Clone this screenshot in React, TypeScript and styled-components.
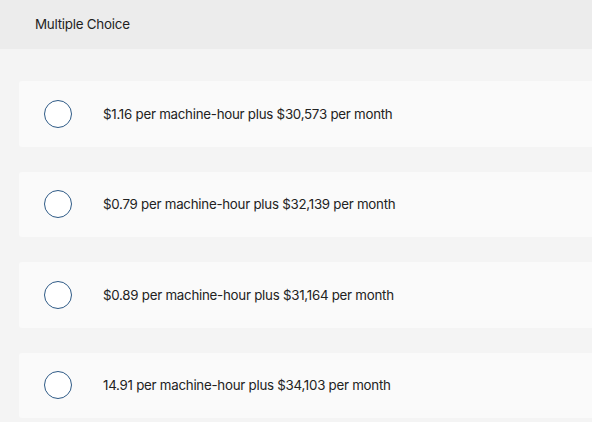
import styled, { createGlobalStyle } from 'styled-components';

const GlobalStyle = createGlobalStyle`
  html, body {
    margin: 0;
    padding: 0;
    background: #f4f4f4;
  }
  * {
    box-sizing: border-box;
  }
`;

const Page = styled.div`
  display: flex;
  flex-direction: column;
  width: 592px;
  height: 422px;
  overflow: hidden;
  background: #f4f4f4;
  font-family: 'Inter', 'Lato', sans-serif;
  color: #222222;
`;

const Header = styled.header`
  display: flex;
  align-items: center;
  height: 49px;
  padding: 0 0 1px 35px;
  background: #ececec;
  font-size: 13.4px;
  letter-spacing: -0.25px;
  color: #1f1f1f;
`;

const Choices = styled.ul`
  display: flex;
  flex-direction: column;
  gap: 25px;
  margin: 0;
  padding: 32px 0 0 19px;
  list-style: none;
`;

const Choice = styled.li`
  display: flex;
  align-items: center;
  gap: 31px;
  height: 65.5px;
  padding-left: 25px;
  background: #fafafa;
  border-radius: 3px 0 0 3px;
  font-size: 13.3px;
  letter-spacing: -0.25px;
  cursor: pointer;
`;

const Radio = styled.span`
  flex: none;
  width: 28px;
  height: 28px;
  border: 1.5px solid #2e5a86;
  border-radius: 50%;
  background: #ffffff;
`;

const options = [
  '$1.16 per machine-hour plus $30,573 per month',
  '$0.79 per machine-hour plus $32,139 per month',
  '$0.89 per machine-hour plus $31,164 per month',
  '14.91 per machine-hour plus $34,103 per month',
];

const App = () => {
  return (
    <Page>
      <GlobalStyle />
      <Header>Multiple Choice</Header>
      <Choices>
        {options.map((text) => (
          <Choice key={text}>
            <Radio />
            <span>{text}</span>
          </Choice>
        ))}
      </Choices>
    </Page>
  );
};

export default App;
